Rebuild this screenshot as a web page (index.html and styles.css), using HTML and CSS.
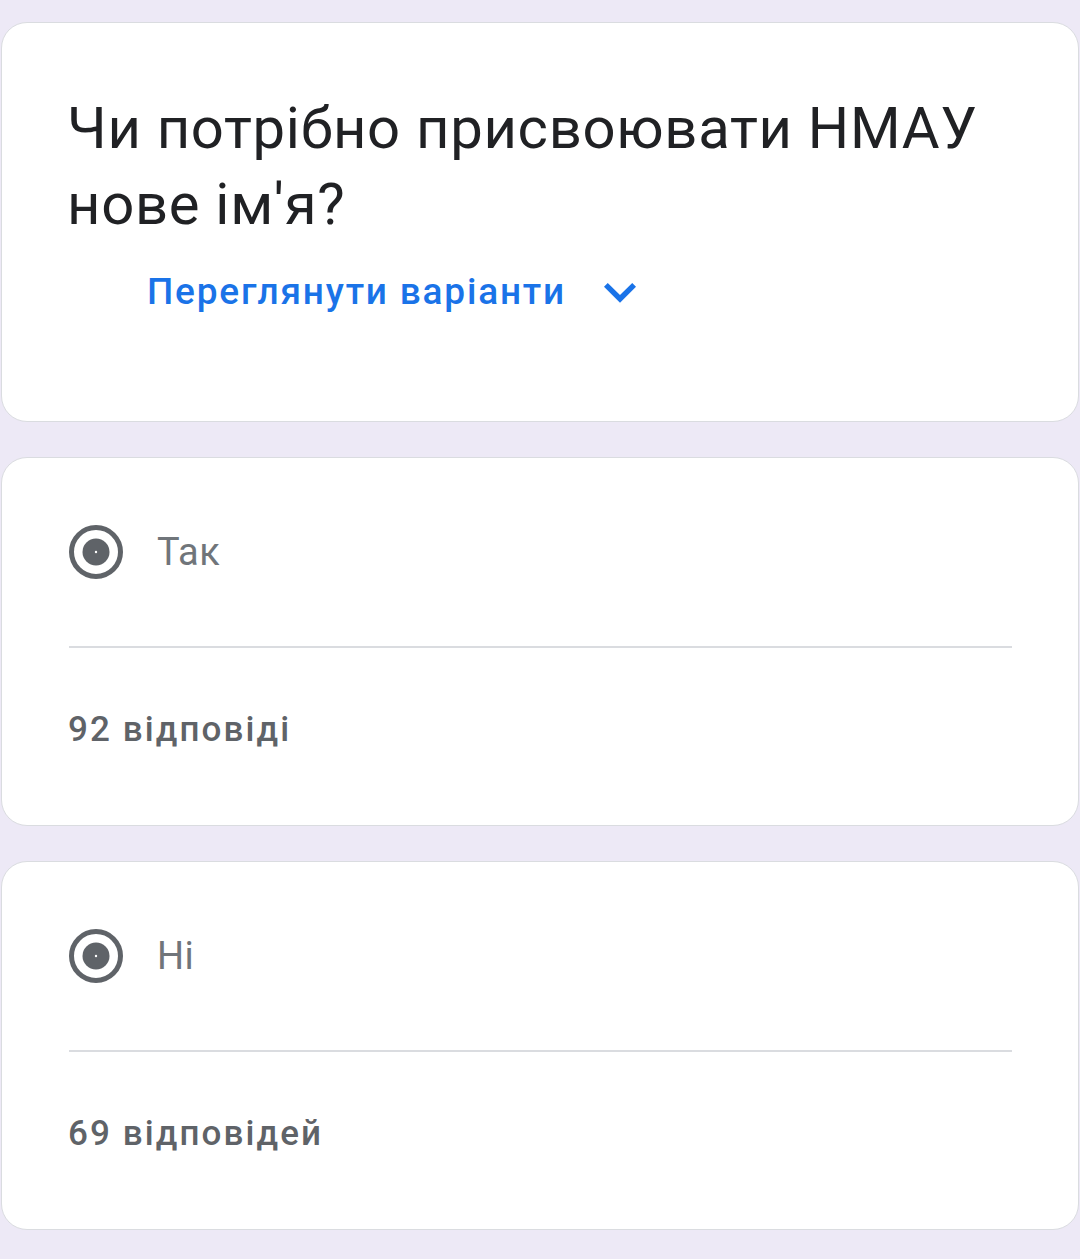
FILE: index.html
```html
<!DOCTYPE html>
<html lang="uk">
<head>
<meta charset="utf-8">
<link rel="stylesheet" href="styles.css">
</head>
<body>
<main class="page">
  <section class="card card-question">
    <h1 class="title">Чи потрібно присвоювати НМАУ нове ім'я?</h1>
    <div class="toggle">
      <span class="toggle-text">Переглянути варіанти</span>
      <svg class="chevron" viewBox="0 0 24 24" width="64" height="64" aria-hidden="true"><path d="M16.59 8.59L12 13.17 7.41 8.59 6 10l6 6 6-6z"/></svg>
    </div>
  </section>

  <section class="card card-option">
    <div class="option">
      <svg class="radio" viewBox="0 0 54 54" width="54" height="54" aria-hidden="true">
        <circle cx="27" cy="27" r="24.5" fill="none" stroke="#5f6368" stroke-width="5"/>
        <circle cx="27" cy="27" r="13.5" fill="#5f6368"/>
        <circle cx="27" cy="27" r="1.2" fill="#ffffff"/>
      </svg>
      <span class="option-label">Так</span>
    </div>
    <hr class="divider">
    <div class="count">92 відповіді</div>
  </section>

  <section class="card card-option">
    <div class="option">
      <svg class="radio" viewBox="0 0 54 54" width="54" height="54" aria-hidden="true">
        <circle cx="27" cy="27" r="24.5" fill="none" stroke="#5f6368" stroke-width="5"/>
        <circle cx="27" cy="27" r="13.5" fill="#5f6368"/>
        <circle cx="27" cy="27" r="1.2" fill="#ffffff"/>
      </svg>
      <span class="option-label">Ні</span>
    </div>
    <hr class="divider">
    <div class="count">69 відповідей</div>
  </section>
</main>
</body>
</html>
```

FILE: styles.css
```css
html, body {
  margin: 0;
  padding: 0;
}
body {
  background: #ede9f6;
  font-family: Roboto, "Noto Sans", "Liberation Sans", sans-serif;
  width: 1080px;
  height: 1259px;
  overflow: hidden;
}
.page {
  display: flex;
  flex-direction: column;
  gap: 35px;
  padding: 22px 1px 0 1px;
}
.card {
  background: #ffffff;
  border: 1px solid #dadce0;
  border-radius: 26px;
  box-sizing: border-box;
}
.card-question {
  height: 400px;
  padding: 67px 40px 0 65px;
}
.title {
  margin: 0;
  font-size: 58px;
  line-height: 76px;
  font-weight: 400;
  color: #202124;
  letter-spacing: 0.7px;
}
.toggle {
  display: flex;
  align-items: center;
  gap: 22px;
  margin: 18px 0 0 80px;
  height: 64px;
}
.toggle-text {
  font-size: 37px;
  font-weight: 500;
  color: #1a73e8;
  line-height: 64px;
  letter-spacing: 1.8px;
}
.chevron {
  fill: #1a73e8;
  display: block;
}
.card-option {
  height: 369px;
  padding: 67px 66px 0 67px;
}
.option {
  display: flex;
  align-items: center;
  gap: 34px;
  height: 54px;
}
.radio {
  display: block;
  flex: none;
}
.option-label {
  font-size: 38px;
  color: #70757a;
  line-height: 54px;
  letter-spacing: 0.5px;
}
.divider {
  margin: 67px 0 0 0;
  border: none;
  border-top: 2px solid #dadce0;
  height: 0;
}
.count {
  margin: 62px 0 0 -1px;
  font-size: 35px;
  line-height: 40px;
  font-weight: 500;
  color: #5f6368;
  letter-spacing: 2.1px;
}
```
